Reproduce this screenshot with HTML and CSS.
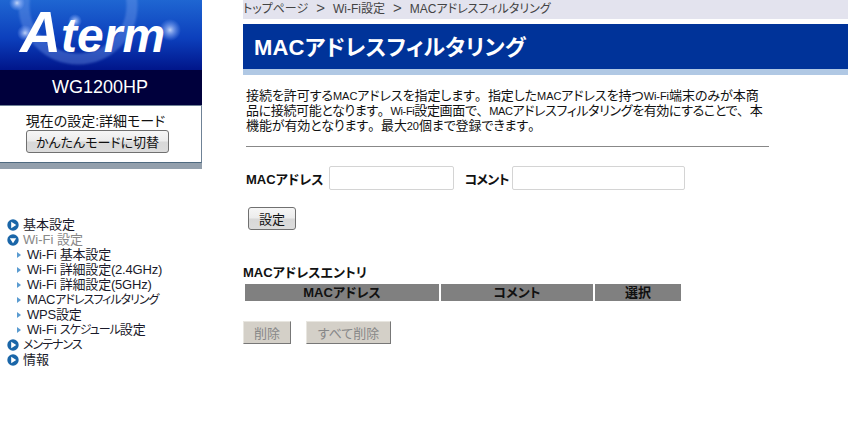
FILE: index.html
```html
<!DOCTYPE html>
<html lang="ja">
<head>
<meta charset="utf-8">
<title>MACアドレスフィルタリング</title>
<link rel="stylesheet" href="styles.css">
</head>
<body>
<div class="page">
  <aside class="sidebar">
    <div class="logo">
      <svg class="logo-art" width="202" height="70" viewBox="0 0 202 70">
        <defs>
          <linearGradient id="sky" x1="0" y1="0" x2="0" y2="1">
            <stop offset="0" stop-color="#1f66d2"/>
            <stop offset="0.55" stop-color="#0c3fbc"/>
            <stop offset="1" stop-color="#00158a"/>
          </linearGradient>
          <radialGradient id="glow">
            <stop offset="0" stop-color="#dce8ff" stop-opacity=".85"/>
            <stop offset="0.45" stop-color="#a9c4ff" stop-opacity=".5"/>
            <stop offset="1" stop-color="#8fb4ff" stop-opacity="0"/>
          </radialGradient>
          <filter id="soft"><feGaussianBlur stdDeviation="1.2"/></filter>
        </defs>
        <rect width="202" height="70" fill="url(#sky)"/>
        <circle cx="78" cy="5" r="54" fill="none" stroke="#7fa6f0" stroke-opacity=".35" stroke-width="11" filter="url(#soft)"/>
        <circle cx="170" cy="30" r="11" fill="url(#glow)"/>
        <circle cx="25" cy="33" r="8" fill="url(#glow)"/>
        <circle cx="17" cy="3" r="8" fill="url(#glow)"/>
        <circle cx="75" cy="21" r="7" fill="url(#glow)"/>
        <text class="logo-text" x="20" y="52" textLength="145" lengthAdjust="spacingAndGlyphs"><tspan class="logo-a">A</tspan>term</text>
      </svg>
    </div>
    <div class="model">WG1200HP</div>
    <div class="mode">
      <div class="mode-label">現在の設定:詳細モード</div>
      <button class="btn btn-mode" type="button">かんたんモードに切替</button>
    </div>
    <nav class="nav">
      <div class="nav-top"><svg class="bullet" viewBox="0 0 12 12"><circle cx="6" cy="6" r="5.7" fill="#1a66a8"/><path d="M4.2 2.8 9.2 6 4.2 9.2Z" fill="#fff"/></svg><span>基本設定</span></div>
      <div class="nav-top nav-open"><svg class="bullet" viewBox="0 0 12 12"><circle cx="6" cy="6" r="5.7" fill="#1a66a8"/><path d="M2.8 4.2 6 9.2 9.2 4.2Z" fill="#fff"/></svg><span>Wi-Fi 設定</span></div>
      <div class="nav-sub"><i class="tri"></i><span>Wi-Fi 基本設定</span></div>
      <div class="nav-sub"><i class="tri"></i><span>Wi-Fi 詳細設定(2.4GHz)</span></div>
      <div class="nav-sub"><i class="tri"></i><span>Wi-Fi 詳細設定(5GHz)</span></div>
      <div class="nav-sub"><i class="tri"></i><span>MAC<span class="kana">アドレスフィルタリング</span></span></div>
      <div class="nav-sub"><i class="tri"></i><span>WPS設定</span></div>
      <div class="nav-sub"><i class="tri"></i><span>Wi-Fi <span class="kana">スケジュール</span>設定</span></div>
      <div class="nav-top"><svg class="bullet" viewBox="0 0 12 12"><circle cx="6" cy="6" r="5.7" fill="#1a66a8"/><path d="M4.2 2.8 9.2 6 4.2 9.2Z" fill="#fff"/></svg><span class="kana">メンテナンス</span></div>
      <div class="nav-top"><svg class="bullet" viewBox="0 0 12 12"><circle cx="6" cy="6" r="5.7" fill="#1a66a8"/><path d="M4.2 2.8 9.2 6 4.2 9.2Z" fill="#fff"/></svg><span>情報</span></div>
    </nav>
  </aside>
  <main class="main">
    <div class="crumb">トップページ<span class="sep">&gt;</span>Wi-Fi設定<span class="sep">&gt;</span>MACアドレスフィルタリング</div>
    <h1 class="title">MACアドレスフィルタリング</h1>
    <div class="content">
      <p class="desc"><span class="line line-a">接続を許可する<span class="lat">MAC</span>アドレスを指定します<span class="fw">。</span>指定した<span class="lat">MAC</span>アドレスを持つ<span class="lat">Wi-Fi</span>端末のみが本商</span><span class="line line-b">品に接続可能となります<span class="fw">。</span><span class="lat">Wi-Fi</span>設定画面で<span class="fw">、</span><span class="lat">MAC</span>アドレスフィルタリングを有効にすることで<span class="fw">、</span>本</span><span class="line line-c">機能が有効となります<span class="fw">。</span>最大<span class="lat">20</span>個まで登録できます<span class="fw">。</span></span></p>
      <hr class="rule">
      <div class="form-row">
        <label class="lbl">MACアドレス</label>
        <input class="field field-mac" type="text">
        <label class="lbl lbl-comment">コメント</label>
        <input class="field field-comment" type="text">
      </div>
      <button class="btn btn-set" type="button">設定</button>
    </div>
    <h2 class="entry-title">MACアドレスエントリ</h2>
    <div class="entry-head">
      <div class="th th-mac">MACアドレス</div>
      <div class="th th-comment">コメント</div>
      <div class="th th-select">選択</div>
    </div>
    <div class="actions">
      <button class="btn-off btn-del" type="button" disabled>削除</button>
      <button class="btn-off btn-delall" type="button" disabled>すべて削除</button>
    </div>
  </main>
</div>
</body>
</html>
```
FILE: styles.css
```css
html, body { margin: 0; padding: 0; background: #fff; }
body {
  font-family: "Liberation Sans", "Noto Sans CJK JP", sans-serif;
  font-size: 13px;
  color: #111;
  overflow: hidden;
  font-feature-settings: "palt";
}
.page { display: flex; width: 848px; height: 424px; }
.sidebar { width: 202px; flex: none; }
.logo { height: 70px; }
.logo-art { display: block; }
.logo-text {
  font-family: "Liberation Sans", sans-serif;
  font-style: italic;
  font-weight: bold;
  font-size: 48px;
  fill: #fff;
}
.logo-a { font-size: 57px; }
.model {
  height: 35px;
  line-height: 35px;
  background: #00003c;
  color: #fff;
  text-align: center;
  font-size: 18px;
  padding-right: 2px;
}
.mode {
  height: 58px;
  box-sizing: border-box;
  border-top: 1px solid #6f8296;
  border-right: 1px solid #6f8296;
  border-bottom: 1px solid #4f6a80;
  box-shadow: 0 6px 0 #939fac;
  text-align: center;
  padding-top: 7px;
}
.mode-label { font-size: 14px; line-height: 17px; margin-left: -10px; }
.btn {
  font-family: inherit;
  font-feature-settings: inherit;
  font-size: 13px;
  color: #111;
  border: 1px solid #707070;
  border-radius: 3px;
  background: linear-gradient(#f6f6f6, #ececec 48%, #d8d8d8 52%, #dcdcdc);
  padding: 0;
}
.btn-mode { display: block; width: 143px; height: 23px; margin: 0 0 0 26px; font-size: 13px; }
.nav { margin-top: 54px; padding-left: 7px; }
.nav-top, .nav-sub { display: flex; align-items: center; height: 15px; font-size: 13px; line-height: 15px; color: #1a1a2a; white-space: nowrap; }
.bullet { width: 12px; height: 12px; flex: none; margin-right: 4px; }
.nav-open { color: #888; }
.nav-sub { padding-left: 10px; letter-spacing: -.2px; }
.kana { font-size: 12px; letter-spacing: -1px; line-height: 0; }
.tri { width: 0; height: 0; border-left: 4px solid #5a9bd0; border-top: 3px solid transparent; border-bottom: 3px solid transparent; margin-right: 6px; flex: none; }
.main { margin-left: 41px; flex: 1; min-width: 0; }
.crumb { height: 19px; line-height: 18px; background: #e3e3ee; color: #444; font-size: 12px; white-space: nowrap; }
.sep { margin: 0 8px; font-size: 15px; line-height: 15px; }
.title {
  margin: 5px 0 0;
  height: 45px;
  line-height: 47px;
  background: #003399;
  border-bottom: 6px solid #b0c8e4;
  color: #fff;
  font-size: 22px;
  font-weight: bold;
  padding-left: 11px;
  letter-spacing: .2px;
  white-space: nowrap;
}
.content { padding-left: 3px; width: 526px; }
.desc { margin: 13px 0 0; font-size: 13px; white-space: nowrap; }
.line { display: block; height: 15px; line-height: 15px; }
.line-a { letter-spacing: -.06px; }
.line-b { letter-spacing: -.37px; }
.line-c { letter-spacing: -.1px; }
.lat { font-size: 11px; line-height: 0; }
.fw { font-feature-settings: normal; }
.rule { margin: 13px 0 0; border: 0; border-top: 1px solid #888; width: 523px; }
.form-row { display: flex; align-items: center; margin-top: 19px; height: 24px; }
.lbl { font-weight: bold; font-size: 13px; white-space: nowrap; }
.field { box-sizing: border-box; height: 24px; border: 1px solid #d4d4d4; border-radius: 2px; background: #fff; padding: 0; margin-left: 5px; }
.field-mac { width: 125px; }
.lbl-comment { margin-left: 11px; letter-spacing: -.7px; }
.field-comment { width: 173px; margin-left: 3px; }
.btn-set { display: block; width: 48px; height: 23px; margin: 17px 0 0 2px; }
.entry-title { margin: 35px 0 0; font-size: 13px; line-height: 15px; font-weight: bold; }
.entry-head { display: flex; gap: 2px; margin: 4px 0 0 2px; width: 436px; height: 17px; }
.th { background: #808080; font-weight: bold; font-size: 13px; line-height: 17px; text-align: center; color: #111; }
.th-mac { width: 194px; }
.th-comment { width: 152px; }
.th-select { width: 86px; }
.actions { display: flex; gap: 15px; margin-top: 20px; }
.btn-off {
  font-family: inherit;
  font-feature-settings: inherit;
  font-size: 13px;
  height: 23px;
  color: #888;
  background: #d4d0c8;
  border: 1px solid;
  border-color: #e8e6e0 #777 #777 #e8e6e0;
  padding: 0;
}
.btn-del { width: 48px; }
.btn-delall { width: 85px; }
```
